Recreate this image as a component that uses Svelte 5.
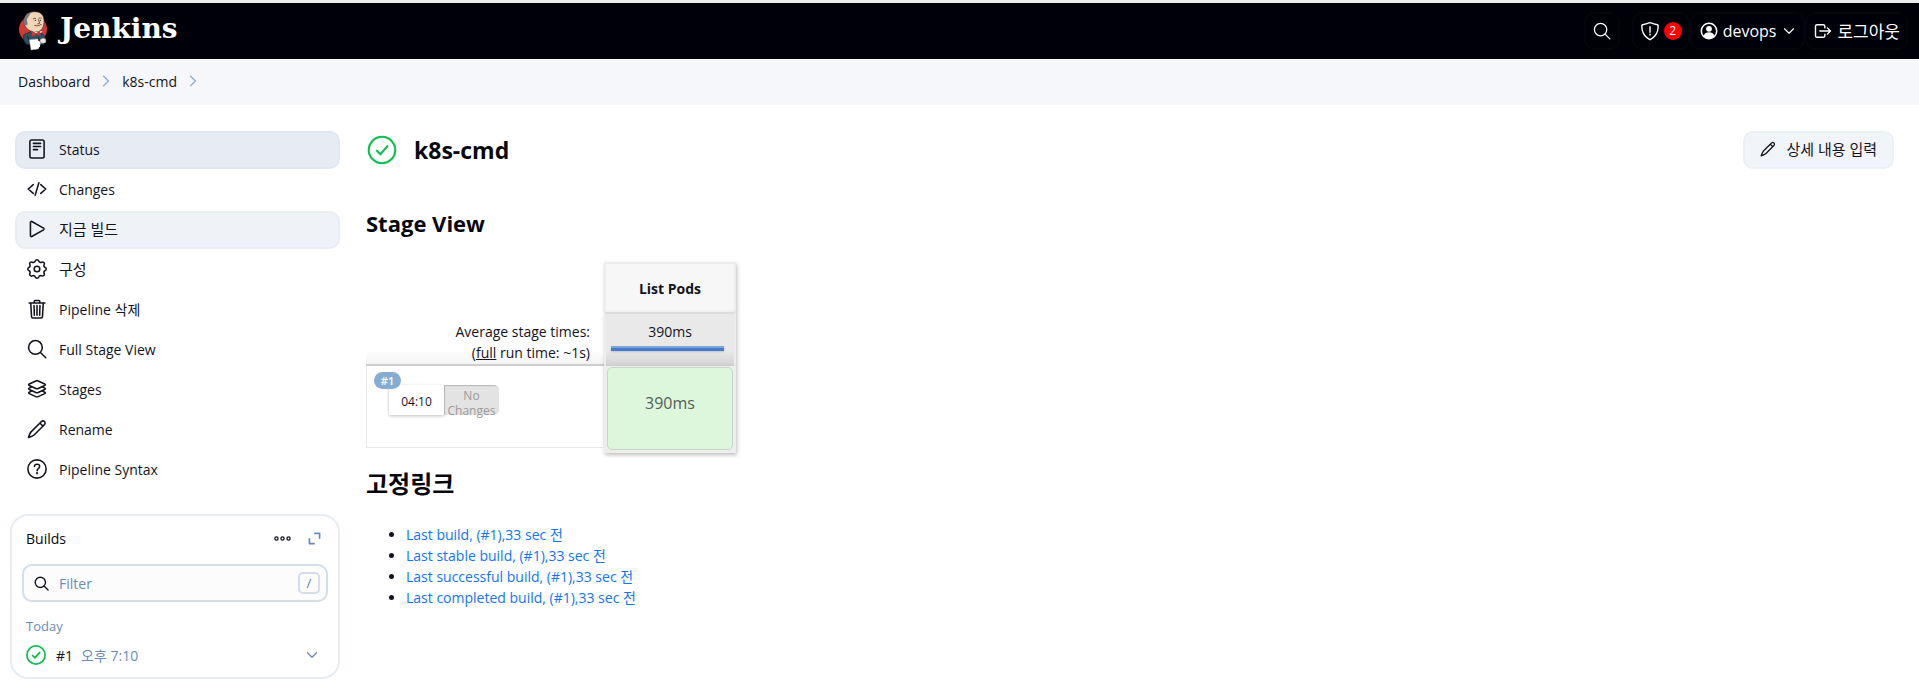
<script>
  const tasks = [
    { icon: 'status', label: 'Status', state: 'active' },
    { icon: 'code', label: 'Changes' },
    { icon: 'play', label: '지금 빌드', state: 'hover', korean: true },
    { icon: 'gear', label: '구성', korean: true },
    { icon: 'trash', label: 'Pipeline 삭제' },
    { icon: 'search', label: 'Full Stage View' },
    { icon: 'layers', label: 'Stages' },
    { icon: 'pencil', label: 'Rename' },
    { icon: 'help', label: 'Pipeline Syntax' }
  ];

  const permalinks = [
    'Last build, (#1),33 sec 전',
    'Last stable build, (#1),33 sec 전',
    'Last successful build, (#1),33 sec 전',
    'Last completed build, (#1),33 sec 전'
  ];

  let filter = $state('');
</script>

{#snippet icon(name, size)}
  <svg class="icon" width={size} height={size} viewBox="0 0 512 512" aria-hidden="true">
    {#if name === 'status'}
      <rect x="74" y="26" width="364" height="460" rx="44" />
      <path d="M164 112h184M164 192h184M164 272h104" />
    {:else if name === 'code'}
      <path d="M160 368L32 256l128-112M352 368l128-112-128-112M304 96l-96 320" />
    {:else if name === 'play'}
      <path d="M88 88v336c0 20 18 32 34 23l302-170c15-9 15-33 0-42L122 65c-16-9-34 3-34 23z" />
    {:else if name === 'gear'}
      <circle cx="256" cy="256" r="72" />
      <path d="M211 51c14-40 76-40 90 0 10 31 45 46 74 31 41-21 84 22 64 63-15 29 0 64 31 74 30 14 30 60 0 74-31 10-46 45-31 74 21 41-22 84-63 64-29-15-64 0-74 31-14 40-76 40-90 0-10-31-45-46-74-31-41 21-84-22-64-63 15-29 0-64-31-74-30-14-30-60 0-74 31-10 46-45 31-74-21-41 22-84 63-64 29 15 64 0 74-31z" />
    {:else if name === 'trash'}
      <path d="M96 112l20 340c1 18 14 32 32 32h216c18 0 31-14 32-32l20-340" />
      <path d="M54 100h404M184 100V62a24 24 0 0124-24h96a24 24 0 0124 24v38M256 170v244M180 170l8 244M332 170l-8 244" />
    {:else if name === 'search'}
      <circle cx="216" cy="216" r="176" />
      <path d="M344 344l136 136" />
    {:else if name === 'layers'}
      <path d="M454 130L286 50c-17-9-43-9-60 0L58 130c-20 10-20 26 0 36l168 77c17 9 43 9 60 0l168-77c20-10 20-26 0-36z" />
      <path d="M116 205l-58 29c-20 10-20 26 0 36l168 75c17 9 43 9 60 0l168-75c20-10 20-26 0-36l-58-29" />
      <path d="M116 310l-58 29c-20 10-20 26 0 36l168 77c17 9 43 9 60 0l168-77c20-10 20-26 0-36l-58-29" />
    {:else if name === 'pencil'}
      <path d="M352 82L104 330c-22 22-46 84-66 144 60-20 122-44 144-66L430 160M352 82l14-14c56-56 134 22 78 78l-14 14M330 104l78 78" />
    {:else if name === 'help'}
      <circle cx="256" cy="256" r="234" />
      <path d="M190 192c2-40 30-56 68-56 40 0 66 24 66 56 0 54-66 50-66 106" />
      <circle cx="257" cy="362" r="10" />
    {:else if name === 'check'}
      <circle cx="256" cy="256" r="212" />
      <path d="M176 268l54 56 112-130" />
    {:else if name === 'shield'}
      <path d="M463 112c0-8-6-15-14-16-88-12-116-22-187-54-4-2-8-2-12 0-71 32-99 42-187 54-8 1-14 8-14 16-4 62 5 168 74 260 34 45 76 80 128 106 3 1 7 1 10 0 52-26 94-61 128-106 69-92 78-198 74-260zM256 144v144" />
      <circle cx="256" cy="344" r="8" />
    {:else if name === 'logout'}
      <path d="M304 336v40a40 40 0 01-40 40H104a40 40 0 01-40-40V136a40 40 0 0140-40h152c22 0 48 18 48 40v40M368 336l80-80-80-80M176 256h256" />
    {:else if name === 'down'}
      <path d="M112 184l144 144 144-144" />
    {:else if name === 'right'}
      <path d="M154 50l206 206-206 206" />
    {:else if name === 'dots'}
      <circle cx="74" cy="256" r="48" /><circle cx="256" cy="256" r="48" /><circle cx="438" cy="256" r="48" />
    {:else if name === 'expand'}
      <path d="M272 56h184v184M240 456H56V272" />
    {/if}
  </svg>
{/snippet}

<header class="top">
  <a class="brand" href="#home">
    <svg width="30" height="40" viewBox="0 0 90 120" aria-hidden="true">
      <ellipse cx="45" cy="55" rx="42" ry="41" fill="#d33833" />
      <path d="M16 72L46 58l24 6 12 14-4 22-20 2-32-2-8-10z" fill="#335061" stroke="#172830" stroke-width="2" />
      <path d="M20 42C14 18 28 2 50 2c18 0 27 10 28 26 1 20-7 34-24 35-17 0-29-8-34-21z" fill="#f0d6b7" stroke="#3d312b" stroke-width="2" />
      <path d="M20 42C14 20 24 6 42 3c-10 8-9 16-15 20-2 7 4 12 1 20z" fill="#737881" />
      <path d="M45 24q5-4 9-1M62 22q5-3 9 0M61 25l4 12-7 2M49 43q9 5 22-3" fill="none" stroke="#5b3c2b" stroke-width="2.500" />
      <circle cx="52" cy="28" r="2" fill="#222" /><circle cx="67" cy="28" r="2" fill="#222" />
      <path d="M42 60l14 10 16-6 1-4-18 3z" fill="#fff" />
      <path d="M40 60l14 7 11-6 2 12-12-2-13 6z" fill="#d33833" stroke="#81302e" />
      <path d="M28 74l9 27M62 78l3 20" stroke="#172830" stroke-width="3" />
      <path d="M34 86l26-2 1 30-22 3z" fill="#fff" stroke="#aaa" />
      <path d="M58 89l10 3-2 14-6 8z" fill="#fff" />
      <path d="M66 86q8-8 17-2l1 10q-10 6-17 0z" fill="#f5e9dd" stroke="#777" />
    </svg>
    <span>Jenkins</span>
  </a>
  <nav class="account" aria-label="Account">
    <button class="search" aria-label="Search">{@render icon('search', 18)}</button>
    <button class="alerts" aria-label="Security warnings">{@render icon('shield', 20)}<span class="badge">2</span></button>
    <a class="user" href="#devops">
      <svg width="18" height="18" viewBox="0 0 18 18" aria-hidden="true">
        <circle cx="9" cy="9" r="7.700" fill="none" stroke="#fff" stroke-width="1.500" />
        <circle cx="9" cy="6.800" r="2.900" fill="#fff" />
        <path d="M3.500 14c1-3 3-3.800 5.500-3.800s4.500.8 5.500 3.800c-3 3.500-8 3.500-11 0z" fill="#fff" />
      </svg>
      <span>devops</span>
      {@render icon('down', 16)}
    </a>
    <a class="logout" href="#logout">{@render icon('logout', 20)}<span>로그아웃</span></a>
  </nav>
</header>

<nav class="crumbs" aria-label="Breadcrumb">
  <a href="#dashboard">Dashboard</a>
  {@render icon('right', 12)}
  <a href="#job">k8s-cmd</a>
  {@render icon('right', 12)}
</nav>

<div class="page">
  <aside>
    <nav class="tasks" aria-label="Tasks">
      {#each tasks as task}
        <a href="#{task.icon}" class={task.state} class:korean={task.korean}>
          {@render icon(task.icon, 20)}<span>{task.label}</span>
        </a>
      {/each}
    </nav>

    <section class="builds">
      <div class="builds-head">
        <h2>Builds</h2>
        <button aria-label="More actions">{@render icon('dots', 17)}</button>
        <button class="expand" aria-label="Expand">{@render icon('expand', 13)}</button>
      </div>
      <label class="filter">
        {@render icon('search', 15)}
        <input type="text" placeholder="Filter" aria-label="Filter builds" bind:value={filter} />
        <kbd>/</kbd>
      </label>
      <h3>Today</h3>
      <div class="build">
        <span class="ok">{@render icon('check', 22)}</span>
        <a href="#1">#1</a>
        <time>오후 7:10</time>
        <button aria-label="Build menu">{@render icon('down', 16)}</button>
      </div>
    </section>
  </aside>

  <main>
    <div class="title">
      <span class="ok">{@render icon('check', 32)}</span>
      <h1>k8s-cmd</h1>
      <button class="describe">{@render icon('pencil', 16)}<span>상세 내용 입력</span></button>
    </div>

    <h2>Stage View</h2>
    <table class="stages">
      <thead>
        <tr><td></td><th scope="col" class="stage name">List Pods</th></tr>
      </thead>
      <tbody>
        <tr class="averages">
          <th scope="row">Average stage times:<br />(<u>full</u> run time: ~1s)</th>
          <td class="stage">390ms<div class="bar"></div></td>
        </tr>
        <tr class="run">
          <th scope="row">
            <div class="run-box">
              <a class="pill" href="#1">#1</a>
              <div class="when">04:10</div>
              <div class="changes">No<br />Changes</div>
            </div>
          </th>
          <td class="stage"><div class="success">390ms</div></td>
        </tr>
      </tbody>
    </table>

    <h2 class="links-title">고정링크</h2>
    <ul>
      {#each permalinks as link}
        <li><a href="#build">{link}</a></li>
      {/each}
    </ul>
  </main>
</div>

<style>
  :global(body) {
    margin: 0;
    background: #fff;
    color: #14141f;
    font: 14px/21px "Open Sans", "Noto Sans CJK KR", sans-serif;
  }
  * { box-sizing: border-box; }
  a { color: inherit; text-decoration: none; }
  button {
    display: inline-flex;
    align-items: center;
    padding: 0;
    border: 0;
    background: none;
    color: inherit;
    font: inherit;
    cursor: pointer;
  }
  h1, h2, h3 { margin: 0; color: #07070f; }
  .icon {
    flex: none;
    fill: none;
    stroke: currentColor;
    stroke-width: 40;
    stroke-linecap: round;
    stroke-linejoin: round;
  }

  .top {
    display: flex;
    align-items: center;
    justify-content: space-between;
    height: 59px;
    padding: 0 11px 0 18px;
    border-top: 3px solid #ececec;
    background: #000009;
    color: #fff;
  }
  .brand { display: flex; align-items: center; gap: 12px; }
  .brand span { font: bold 28px/36px "DejaVu Serif", serif; padding-bottom: 4px; }
  .account { display: flex; align-items: center; font-size: 16px; }
  .account > * {
    display: flex;
    align-items: center;
    height: 38px;
    border: 2px solid #05050f;
    border-radius: 10px;
  }
  .search { width: 36px; justify-content: center; margin-right: 12px; }
  .alerts { gap: 4px; padding: 0 6px; }
  .badge {
    width: 18px;
    border-radius: 9px;
    background: #f00;
    font-size: 12px;
    line-height: 18px;
    text-align: center;
  }
  .user { gap: 5px; padding: 0 6px 0 8px; font-weight: 500; }
  .account .icon { stroke-width: 36; }
  .logout { gap: 4px; padding: 0 6px; }
  .logout span { font-size: 17px; }

  .crumbs {
    display: flex;
    align-items: center;
    gap: 10px;
    height: 46px;
    padding: 0 18px 2px;
    background: #f5f7fa;
  }
  .crumbs .icon { color: #93add2; stroke-width: 60; }

  .page { display: flex; gap: 26px; padding: 26px 25px 0 10px; }
  aside { flex: none; width: 330px; }
  .tasks { display: grid; gap: 2px; padding-left: 5px; }
  .tasks a {
    display: flex;
    align-items: center;
    gap: 12px;
    height: 38px;
    padding: 0 10px 2px;
    border: 2px solid transparent;
    border-radius: 10px;
  }
  .tasks .active { background: #e6ebf4; border-color: #e2e8f2; }
  .tasks .hover { background: #eff3f8; border-color: #e9eef4; }
  .korean { font-size: 15px; }

  .builds {
    margin-top: 25px;
    padding: 6px 10px 2px;
    border: 2px solid #e7ecf4;
    border-radius: 18px;
  }
  .builds-head { display: flex; align-items: center; height: 32px; padding: 0 7px 0 4px; }
  .builds-head h2 { flex: 1; font-size: 14px; font-weight: 400; line-height: 21px; }
  .builds-head .expand { margin-left: 17px; color: #6b8bb5; }
  .expand .icon { stroke-width: 68; }
  .filter {
    display: flex;
    align-items: center;
    gap: 10px;
    height: 38px;
    margin-top: 10px;
    padding: 0 6px 0 10px;
    border: 2px solid #d5dcea;
    border-radius: 10px;
    background: #fcfcfd;
  }
  .filter input {
    flex: 1;
    min-width: 0;
    padding: 0;
    border: 0;
    outline: 0;
    background: none;
    font: inherit;
  }
  .filter .icon { stroke-width: 48; }
  .filter input::placeholder { color: #6b8bb5; opacity: 1; }
  kbd {
    width: 22px;
    border: 2px solid #d5dcea;
    border-radius: 5px;
    color: #5b7bab;
    font: 13px/18px "Open Sans", sans-serif;
    text-align: center;
  }
  .builds h3 { margin: 15px 4px 0; color: #6b8bb5; font-size: 13px; font-weight: 400; line-height: 18px; }
  .build { display: flex; align-items: center; height: 40px; padding: 0 8px 0 3px; gap: 8px; }
  .build a { margin-left: 1px; }
  .build time { flex: 1; color: #6b8bb5; }
  .build button { color: #6b8bb5; }
  .ok { display: flex; color: #0dbf50; }

  main { flex: 1; min-width: 0; }
  .title { display: flex; align-items: center; gap: 16px; height: 38px; }
  .title .ok .icon { stroke-width: 34; }
  h1 { flex: 1; font-size: 23px; line-height: 32px; }
  main h2 { margin: 38px 0 23px; font-size: 22px; line-height: 32px; }
  .describe {
    height: 38px;
    gap: 10px;
    padding: 0 15px 2px;
    border: 2px solid #eaf0f6;
    border-radius: 10px;
    background: #f1f5f9;
    font-size: 15px;
  }

  .stages { border-collapse: separate; border-spacing: 0; }
  .stages th, .stages td { padding: 0; font-weight: 400; }
  .stages tr > :first-child { width: 238px; }
  .stages .stage {
    width: 132px;
    border: solid #ededed;
    border-width: 0 2px;
    background: #f7f7f7;
    box-shadow: 1px 2px 4px #00000040;
    text-align: center;
  }
  .stages .name { height: 50px; border-top-width: 2px; font-weight: 700; }
  .stages .averages th {
    height: 54px;
    padding: 9px 14px 0 0;
    border-bottom: 2px solid #cfcfcf;
    background: linear-gradient(#fff 75%, #f3f3f3);
    text-align: right;
    vertical-align: top;
  }
  .stages .averages .stage {
    padding: 7px 4px 0;
    border-top: 2px solid #dcdcdc;
    background: linear-gradient(#e9e9e9 70%, #d2d2d2);
    vertical-align: top;
  }
  .bar {
    height: 5px;
    margin: 4px 6px 0 1px;
    background: linear-gradient(#78a7d6 50%, #4779d0 50%);
    box-shadow: 0 1px 2px #00000026;
  }
  .stages .run th { padding: 0; vertical-align: top; }
  .stages .run .stage { padding: 1px; border-bottom: 2px solid #ededed; background: #eee; }
  .success {
    height: 83px;
    border: 1px solid #c9d4c9;
    border-radius: 5px;
    background: #ddf7dd;
    color: #555f57;
    font-size: 16px;
    line-height: 70px;
  }
  .run-box {
    position: relative;
    display: flex;
    height: 82px;
    padding: 19px 0 0 22px;
    border: 1px solid #e8e8e8;
    border-top: 0;
    font-size: 12px;
    line-height: 15px;
    text-align: center;
  }
  .pill {
    position: absolute;
    top: 6px;
    left: 7px;
    width: 27px;
    border-radius: 9px;
    background: #87acd2;
    color: #fff;
    font-size: 11px;
    font-weight: 600;
    line-height: 17px;
  }
  .when { width: 55px; height: 30px; padding-top: 9px; background: #fff; box-shadow: 0 1px 3px #00000040; }
  .changes {
    width: 55px;
    height: 30px;
    padding-top: 3px;
    border-radius: 0 5px 5px 0;
    background: #e3e3e3;
    box-shadow: inset 1px 1px 1px #00000033;
    color: #9a9a9a;
  }

  main .links-title { margin: 15px 0 24px; font-size: 24px; }
  ul { margin: 0; padding-left: 40px; }
  li a { color: #1474f5; }
</style>
